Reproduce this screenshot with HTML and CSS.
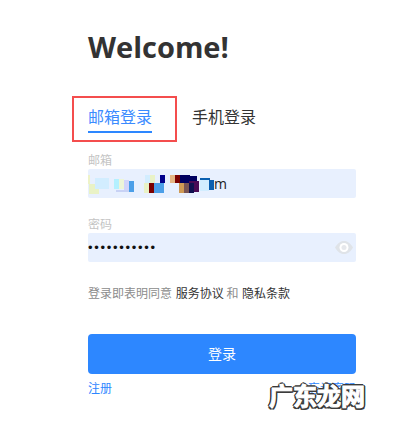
FILE: index.html
```html
<!DOCTYPE html>
<html lang="zh">
<head>
<meta charset="utf-8">
<title>Welcome</title>
<link rel="stylesheet" href="styles.css">
</head>
<body>
<main class="login">
  <h1 class="title">Welcome!</h1>
  <div class="tabs">
    <span class="tab active">邮箱登录</span>
    <span class="tab">手机登录</span>
  </div>
  <label class="label">邮箱</label>
  <div class="field">
    <svg class="mosaic" width="126" height="29" viewBox="88 169 126 29" aria-hidden="true" shape-rendering="crispEdges">
      <rect x="88" y="175" width="2" height="9" fill="#eef3c8"/>
      <rect x="89" y="184" width="10" height="10" fill="#e9f2c6"/>
      <rect x="95" y="178" width="14" height="11" fill="#d2edff"/>
      <rect x="114" y="179" width="5" height="10" fill="#b4f0ff"/>
      <rect x="119" y="179" width="5" height="10" fill="#eef5d8"/>
      <rect x="124" y="180" width="5" height="10" fill="#d2d4fb"/>
      <rect x="129" y="181" width="5" height="11" fill="#4c9fe8"/>
      <rect x="116" y="190" width="13" height="2" fill="#c8d2f5"/>
      <rect x="145" y="175" width="5" height="8" fill="#d2edff"/>
      <rect x="150" y="175" width="5" height="8" fill="#e9f2c6"/>
      <rect x="160" y="175" width="5" height="8" fill="#00008b"/>
      <rect x="144" y="183" width="5" height="10" fill="#e9f2c6"/>
      <rect x="149" y="183" width="5" height="10" fill="#7a0000"/>
      <rect x="154" y="183" width="10" height="10" fill="#4c9fe8"/>
      <rect x="170" y="175" width="5" height="8" fill="#e5b583"/>
      <rect x="175" y="175" width="5" height="8" fill="#7a0000"/>
      <rect x="180" y="175" width="10" height="8" fill="#000060"/>
      <rect x="190" y="176" width="7" height="5" fill="#000060"/>
      <rect x="179" y="183" width="5" height="10" fill="#cf9a55"/>
      <rect x="184" y="183" width="5" height="10" fill="#7a5555"/>
      <rect x="189" y="183" width="5" height="10" fill="#10104f"/>
      <rect x="194" y="181" width="5" height="11" fill="#4a0a55"/>
      <rect x="189" y="181" width="5" height="2" fill="#4a0a55"/>
      <rect x="200" y="179" width="9" height="12" fill="#d2edff"/>
      <rect x="200" y="178" width="10" height="2" fill="#0a5fb0"/>
      <rect x="209" y="180" width="5" height="10" fill="#0a5fb0"/>
    </svg>
    <span class="value">m</span>
  </div>
  <label class="label second">密码</label>
  <div class="field">
    <span class="dots">•••••••••••</span>
    <svg class="eye" width="18" height="13" viewBox="0 0 18 13" aria-hidden="true">
      <path d="M0 6.500C3 1.500 6 0 9 0s6 1.500 9 6.500c-3 5-6 6.500-9 6.500s-6-1.500-9-6.500z" fill="#dfe3e8"/>
      <circle cx="9" cy="6.500" r="4.500" fill="#fff"/>
      <circle cx="9" cy="6.500" r="2.500" fill="#e6e8ec"/>
    </svg>
  </div>
  <p class="terms">登录即表明同意 <span class="link">服务协议</span> 和 <span class="link">隐私条款</span></p>
  <button class="submit" type="button">登录</button>
  <div class="foot">
    <span>注册</span>
    <span>忘记密码</span>
  </div>
</main>
<div class="highlight"></div>
<div class="watermark">广东龙网</div>
</body>
</html>
```
FILE: styles.css
```css
* { box-sizing: border-box; }
html, body { margin: 0; height: 100%; background: #fff; overflow: hidden; }
body {
  position: relative;
  font-family: "Noto Sans CJK SC", "Open Sans", sans-serif;
}
.login {
  width: 268px;
  margin-left: 88px;
  padding-top: 28px;
}
.title {
  margin: 0;
  height: 38px;
  font-family: "Open Sans", "Noto Sans CJK SC", sans-serif;
  font-size: 29px;
  line-height: 38px;
  font-weight: 700;
  color: #333;
}
.tabs {
  display: flex;
  gap: 40px;
  margin-top: 37px;
  height: 30px;
}
.tab {
  width: 64px;
  height: 30px;
  padding-top: 1px;
  font-size: 16px;
  line-height: 24px;
  color: #333;
}
.tab.active {
  color: #3b8bff;
  border-bottom: 2px solid #2d87ff;
}
.label {
  display: block;
  margin-top: 18px;
  height: 18px;
  font-size: 12px;
  line-height: 18px;
  color: #c4c4c4;
}
.label.second { margin-top: 17px; }
.field {
  display: flex;
  align-items: center;
  height: 29px;
  padding-right: 3px;
  background: #e8f0fe;
  border-radius: 2px;
}
.mosaic { flex: none; }
.value {
  font-family: "Open Sans", sans-serif;
  font-size: 14px;
  color: #222;
}
.dots {
  flex: 1;
  font-family: "Liberation Sans", sans-serif;
  font-size: 13px;
  letter-spacing: 1.7px;
  color: #111;
}
.eye { flex: none; }
.terms {
  margin: 21px 0 0;
  height: 20px;
  font-size: 12px;
  line-height: 20px;
  color: #8c8c8c;
  white-space: nowrap;
}
.link { color: #333; margin-left: 1px; }
.submit {
  display: block;
  width: 100%;
  height: 40px;
  margin-top: 31px;
  padding: 0 0 2px;
  border: 0;
  border-radius: 4px;
  background: #2d87ff;
  color: #fff;
  font: 14px/38px "Noto Sans CJK SC", sans-serif;
}
.foot {
  display: flex;
  justify-content: space-between;
  margin-top: 5px;
  font-size: 12px;
  line-height: 17px;
  color: #2d87ff;
}
.highlight {
  position: absolute;
  left: 72px;
  top: 96px;
  width: 105px;
  height: 46px;
  border: 2px solid #f44d4d;
}
.watermark {
  position: absolute;
  left: 269px;
  top: 379px;
  font-size: 24px;
  line-height: 32px;
  font-weight: 700;
  color: #fff;
  -webkit-text-stroke: 1px #fff;
  text-shadow: 2px 0 0 #3a3a3a, -2px 0 0 #3a3a3a, 0 2px 0 #3a3a3a, 0 -2px 0 #3a3a3a, 1.500px 1.500px 0 #3a3a3a, -1.500px 1.500px 0 #3a3a3a, 1.500px -1.500px 0 #3a3a3a, -1.500px -1.500px 0 #3a3a3a;
  white-space: nowrap;
}
```
